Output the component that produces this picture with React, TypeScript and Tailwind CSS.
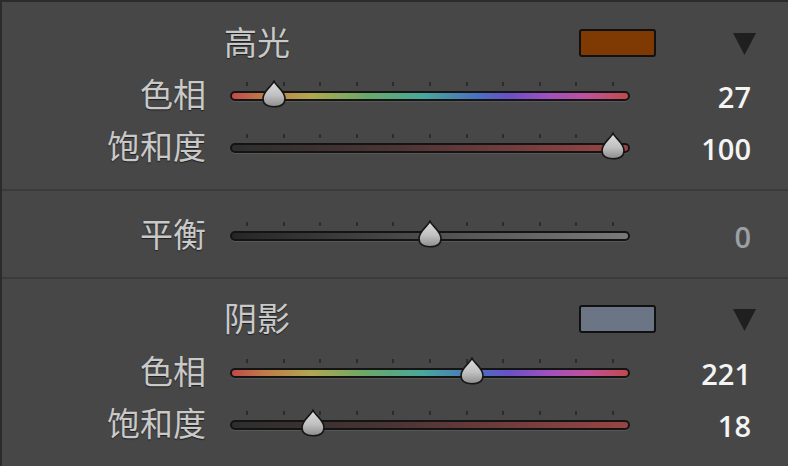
import React from "react";

const HUE =
  "linear-gradient(to right, #c24a4a 0%, #c07a48 8%, #b0a850 20%, #6aa868 34%, #48a89a 48%, #4a70c0 62%, #6a50c8 70%, #a050c0 80%, #c0509a 90%, #c24a4a 100%)";

function Thumb({ x }: { x: number }) {
  return (
    <svg
      className="absolute"
      style={{ left: x - 12, top: 10 }}
      width="24"
      height="28"
      viewBox="0 0 24 28"
    >
      <defs>
        <linearGradient id="tg" x1="0" y1="0" x2="0" y2="1">
          <stop offset="0" stopColor="#dedede" />
          <stop offset="0.55" stopColor="#c0c0c0" />
          <stop offset="1" stopColor="#8c8c8c" />
        </linearGradient>
      </defs>
      <path
        d="M12 1.2 C13.5 5.5, 23 11, 23 18.5 C23 24.5, 18.5 26.8, 12 26.8 C5.5 26.8, 1 24.5, 1 18.5 C1 11, 10.5 5.5, 12 1.2 Z"
        fill="url(#tg)"
        stroke="#161616"
        strokeWidth="1.6"
      />
    </svg>
  );
}

function Slider({ value, min, max, bg }: { value: number; min: number; max: number; bg: string }) {
  const start = 17;
  const end = 383;
  const x = start + ((value - min) / (max - min)) * (end - start);
  const ticks = Array.from({ length: 11 }, (_, i) => start + (i * (end - start)) / 10);
  return (
    <div className="relative w-[400px] h-[52px] shrink-0">
      {ticks.map((t, i) => (
        <div
          key={i}
          className="absolute w-[2px] h-[4px] bg-[#2c2c2c]"
          style={{ left: t - 1, top: 12 }}
        />
      ))}
      <div
        className="absolute left-0 right-0 top-[21px] h-[10px] rounded-full border-[2px] border-[#141414] shadow-[0_1px_0_rgba(255,255,255,0.09)]"
        style={{ background: bg }}
      />
      <Thumb x={x} />
    </div>
  );
}

function Row({
  label,
  value,
  min,
  max,
  bg,
  dim,
}: {
  label: string;
  value: number;
  min: number;
  max: number;
  bg: string;
  dim?: boolean;
}) {
  return (
    <div className="flex items-center h-[52px]">
      <div className="w-[204px] shrink-0 text-right text-[33px] leading-none text-[#c9c9c9] [text-shadow:0_1px_1px_#1e1e1e] pb-[5px]">
        {label}
      </div>
      <div className="w-[24px] shrink-0" />
      <Slider value={value} min={min} max={max} bg={bg} />
      <div
        className={
          "w-[121px] shrink-0 text-right text-[29px] leading-none font-semibold [font-family:'Open_Sans','Noto_Sans',sans-serif] " +
          (dim ? "text-[#9aa0a6] font-normal" : "text-[#f4f4f4]")
        }
      >
        {value}
      </div>
    </div>
  );
}

function Heading({ title, color }: { title: string; color: string }) {
  return (
    <div className="flex items-center h-[50px]">
      <div className="w-[222px] shrink-0" />
      <div className="w-[355px] shrink-0 text-[33px] leading-none text-[#c9c9c9] [text-shadow:0_1px_1px_#1e1e1e] pb-[4px]">
        {title}
      </div>
      <div
        className="w-[77px] h-[28px] shrink-0 rounded-[3px] border-[2px] border-[#111111]"
        style={{ background: color }}
      />
      <div className="w-[77px] shrink-0" />
      <svg width="23" height="23" viewBox="0 0 23 23" className="shrink-0">
        <polygon points="0,1 23,1 11.5,23" fill="#1f1f1f" />
      </svg>
    </div>
  );
}

export default function App() {
  const font = "font-['Noto_Sans_CJK_SC','Noto_Sans',sans-serif]";
  return (
    <div
      className={
        "w-[788px] h-[466px] overflow-hidden bg-[#474747] border-t-[2px] border-l-[2px] border-[#2b2b2b] " +
        font
      }
    >
      <div className="pt-[16px] pb-[15px] border-b-[2px] border-[#3a3a3a]">
        <Heading title="高光" color="#7e3a02" />
        <div className="h-[2px]" />
        <Row label="色相" value={27} min={0} max={360} bg={HUE} />
        <Row
          label="饱和度"
          value={100}
          min={0}
          max={100}
          bg="linear-gradient(to right, #2e2e2e, #4a3434 40%, #9a4444)"
        />
      </div>
      <div className="pt-[19px] pb-[15px] border-b-[2px] border-[#3a3a3a]">
        <Row
          label="平衡"
          value={0}
          min={-100}
          max={100}
          bg="linear-gradient(to right, #262626, #4a4a4a 45%, #7a7a7a)"
          dim
        />
      </div>
      <div className="pt-[15px]">
        <Heading title="阴影" color="#6b7585" />
        <div className="h-[3px]" />
        <Row label="色相" value={221} min={0} max={360} bg={HUE} />
        <Row
          label="饱和度"
          value={18}
          min={0}
          max={100}
          bg="linear-gradient(to right, #2e2e2e, #4a3434 40%, #9a4444)"
        />
      </div>
    </div>
  );
}
